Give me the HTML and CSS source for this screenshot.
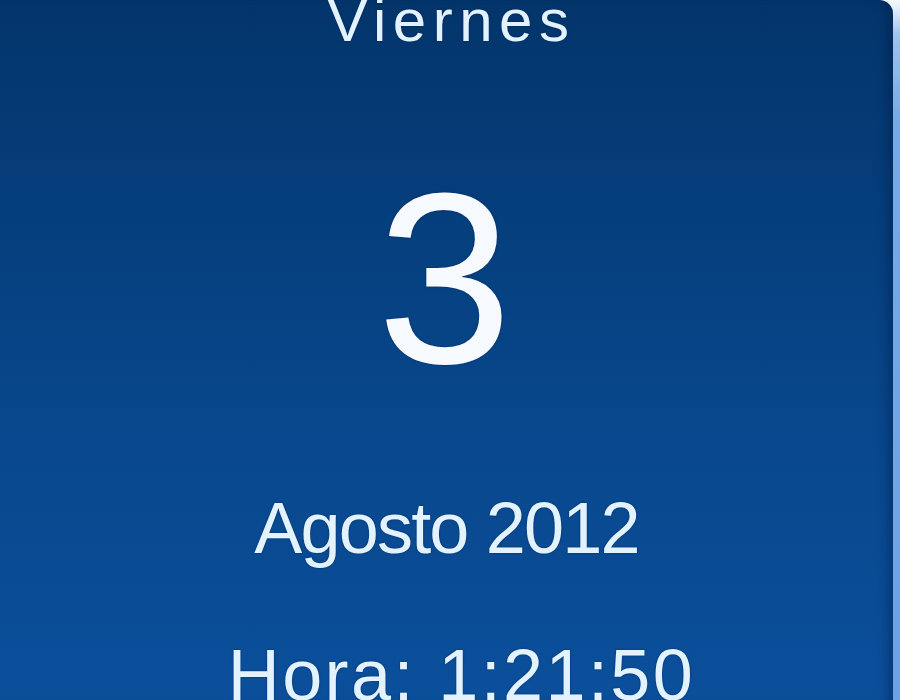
FILE: index.html
```html
<!DOCTYPE html>
<html lang="es">
<head>
<meta charset="utf-8">
<title>Calendario</title>
<link rel="stylesheet" href="styles.css">
</head>
<body>
<div class="gadget">
  <div class="panel">
    <div class="weekday">Viernes</div>
    <div class="day">3</div>
    <div class="month">Agosto 2012</div>
    <div class="time">Hora: 1:21:50</div>
  </div>
</div>
</body>
</html>
```

FILE: styles.css
```css
html, body {
  margin: 0;
  padding: 0;
  width: 900px;
  height: 700px;
  overflow: hidden;
}

.gadget {
  width: 900px;
  height: 700px;
  display: flex;
  overflow: hidden;
  background: linear-gradient(180deg, #f4f8ff 0px, #dbe9fb 12px, #9fc3ee 34px, #76aae6 120px, #6aa2e4 100%);
}

.panel {
  flex: 1;
  margin-right: 7px;
  border-top-right-radius: 14px;
  display: flex;
  flex-direction: column;
  align-items: center;
  background: linear-gradient(180deg, #03356b 0%, #053e7c 30%, #08478c 60%, #0b4f9b 100%);
  box-shadow: inset -12px 0 12px -8px rgba(0, 10, 40, 0.35);
  color: #e2f2ff;
  font-family: "Liberation Sans", Arial, sans-serif;
  text-shadow: 0 0 2px rgba(0, 20, 60, 0.6);
}

.weekday {
  margin-top: -9px;
  margin-left: 10px;
  font-size: 60px;
  line-height: 60px;
  height: 60px;
  letter-spacing: 6.5px;
}

.day {
  margin-top: 106px;
  margin-right: 4px;
  font-size: 243px;
  line-height: 243px;
  height: 243px;
  color: #f6faff;
}

.month {
  margin-top: 92px;
  font-size: 72px;
  line-height: 72px;
  height: 72px;
  letter-spacing: -1.8px;
}

.time {
  margin-top: 75px;
  margin-left: 30px;
  font-size: 72px;
  line-height: 72px;
  height: 72px;
  letter-spacing: 2.4px;
}
```
